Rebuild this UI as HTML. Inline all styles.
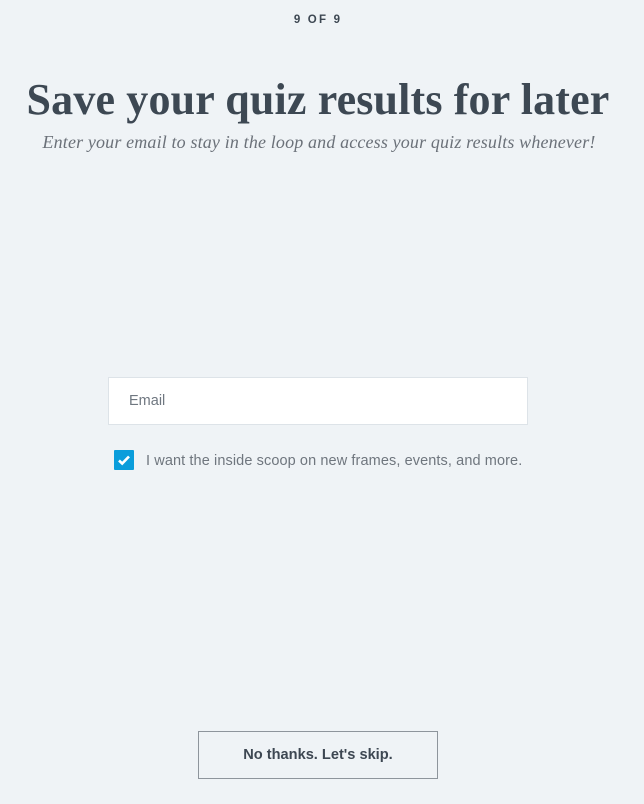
<!DOCTYPE html>
<html><head><meta charset="utf-8"><style>
html,body{margin:0;padding:0;background:#eff3f6;width:644px;height:804px;overflow:hidden;position:relative;font-family:"Liberation Sans",sans-serif}
.step{position:absolute;top:14px;left:-4px;width:644px;text-align:center;font-size:11.5px;letter-spacing:2.2px;color:#3d4752;font-weight:bold}
h1{position:absolute;top:74px;left:-4px;width:644px;margin:0;text-align:center;font-family:"Liberation Serif",serif;font-weight:bold;font-size:44px;color:#3d4853;letter-spacing:0.15px;line-height:52px}
.sub{position:absolute;top:132px;left:-3px;width:644px;text-align:center;font-family:"Liberation Serif",serif;font-style:italic;font-size:18px;color:#6b7179;letter-spacing:0.15px}
.email{position:absolute;left:108px;top:377px;width:418px;height:46px;background:#fff;border:1px solid #dde3e8}
.email span{position:absolute;left:20px;top:15px;font-size:14.5px;color:#6f7780}
.cb{position:absolute;left:114px;top:450px;width:20px;height:20px;background:#0a9ddb;border-radius:1px}
.lbl{position:absolute;left:146px;top:453px;font-size:14.5px;color:#6f767e;letter-spacing:0.1px}
.btn{position:absolute;left:198px;top:731px;width:238px;height:46px;border:1px solid #8e959c;text-align:center;line-height:46px;font-size:14.6px;font-weight:bold;color:#3d4752}
</style></head><body>
<div class="step">9 OF 9</div>
<h1>Save your quiz results for later</h1>
<div class="sub">Enter your email to stay in the loop and access your quiz results whenever!</div>
<div class="email"><span>Email</span></div>
<div class="cb"><svg width="20" height="20" viewBox="0 0 20 20"><path d="M5 10.5l3.2 3L15 6.5" stroke="#fff" stroke-width="2.6" fill="none"/></svg></div>
<div class="lbl">I want the inside scoop on new frames, events, and more.</div>
<div class="btn">No thanks. Let's skip.</div>
</body></html>
